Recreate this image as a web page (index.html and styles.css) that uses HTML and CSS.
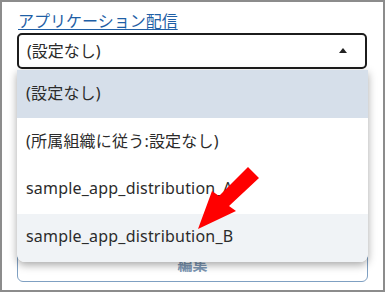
FILE: index.html
```html
<!DOCTYPE html>
<html lang="ja">
<head>
  <meta charset="UTF-8" />
  <title>アプリケーション配信</title>
  <link rel="stylesheet" href="styles.css">
</head>
<body>
  <div class="frame">
    <a class="label" href="#">アプリケーション配信</a>
    <div class="field">
      <div class="select">
        <span>(設定なし)</span>
        <span class="caret"></span>
      </div>
      <ul class="menu">
        <li class="selected">(設定なし)</li>
        <li>(所属組織に従う:設定なし)</li>
        <li>sample_app_distribution_A</li>
        <li class="hover">sample_app_distribution_B</li>
      </ul>
    </div>
    <button class="edit">編集</button>

    <!-- red pointer arrow -->
    <svg class="pointer" viewBox="0 0 385 292" width="385" height="292">
      <polygon points="248,167 259,178 229,206 236,211 198,229 212,191 219,196" fill="#ff0000" />
    </svg>
  </div>
</body>
</html>
```

FILE: styles.css
```css
:root {
  --link: #1f5fa6;
  --text: #2b2b2b;
  --frame: #8c8c8c;
  --selected: #d6dfea;
  --hover: #f0f3f6;
}
* {
  box-sizing: border-box;
  font-family: "Noto Sans", "Noto Sans CJK JP", sans-serif;
}
body {
  margin: 0;
  background: #fff;
}
.frame {
  position: relative;
  width: 385px;
  height: 292px;
  border: 2px solid var(--frame);
  padding: 8px 16px 0 15px;
  overflow: hidden;
}
.label {
  display: block;
  font-size: 16px;
  line-height: 22px;
  color: var(--link);
  text-decoration: underline;
  text-underline-offset: 2px;
  margin-left: 1px;
  width: max-content;
}
.field {
  position: relative;
  margin-top: 1px;
}
.select {
  height: 36px;
  border: 2px solid #1c1c1c;
  border-radius: 5px;
  padding: 0 8px 2px;
  display: flex;
  align-items: center;
  justify-content: space-between;
  font-size: 16px;
  color: var(--text);
}
.caret {
  width: 0;
  height: 0;
  border-left: 4px solid transparent;
  border-right: 4px solid transparent;
  border-bottom: 5px solid #222;
  margin-right: 10px;
}
.menu {
  position: absolute;
  top: 37px;
  left: 0;
  width: 351px;
  margin: 0;
  padding: 0;
  list-style: none;
  background: #fff;
  border-radius: 0 0 8px 8px;
  box-shadow: 0 3px 8px rgba(0, 0, 0, 0.35);
  overflow: hidden;
  z-index: 2;
}
.menu li {
  height: 48px;
  display: flex;
  align-items: center;
  padding: 0 0 4px 9px;
  font-size: 16px;
  letter-spacing: 0.2px;
  color: var(--text);
}
.menu .selected {
  background: var(--selected);
}
.menu .hover {
  background: var(--hover);
}
.edit {
  display: block;
  width: 351px;
  height: 38px;
  margin-top: 175px;
  border: 1px solid #7fa0c2;
  border-radius: 6px;
  background: #fff;
  color: #7c96b3;
  font-size: 15px;
  font-weight: 700;
  padding: 0;
}
.pointer {
  position: absolute;
  top: -2px;
  left: -2px;
  z-index: 3;
}
```
